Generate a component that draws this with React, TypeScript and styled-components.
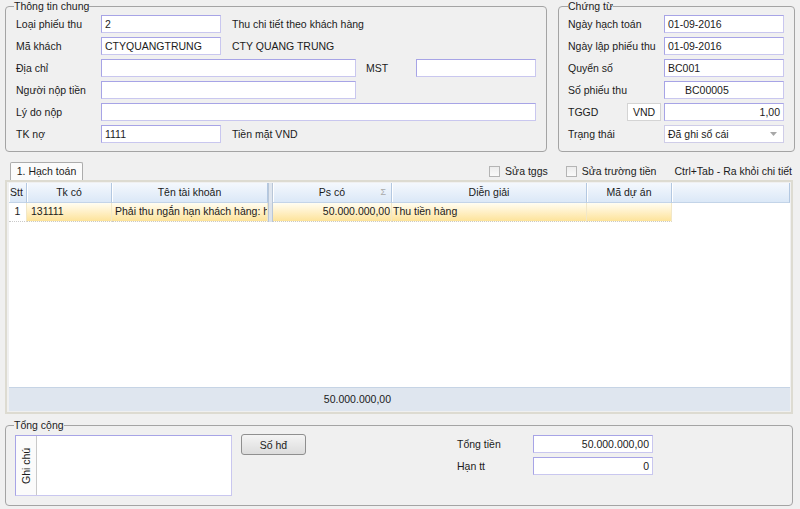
import styled, { createGlobalStyle } from "styled-components";

const GlobalStyle = createGlobalStyle`
  * { box-sizing: border-box; }
  html, body { margin: 0; padding: 0; background: #f0f0f0; }
  body {
    font-family: "Liberation Sans", Arial, sans-serif;
    font-size: 10.5px;
    color: #1b1b1b;
  }
  #root { width: 800px; height: 509px; overflow: hidden; }
`;

const Page = styled.div`
  display: flex;
  flex-direction: column;
  width: 800px;
  height: 509px;
`;

const TopSection = styled.div`
  display: flex;
  gap: 11px;
  padding-left: 5px;
`;

const Group = styled.fieldset<{ $w: number; $h: number }>`
  width: ${p => p.$w}px;
  height: ${p => p.$h}px;
  min-width: 0;
  margin: 0;
  padding: 3px 10px 0 10px;
  border: 1px solid #a4a4a4;
  border-radius: 4px;
`;

const Legend = styled.legend<{ $shift: number }>`
  padding: 0;
  margin-left: ${p => p.$shift}px;
  height: 12px;
  line-height: 12px;
`;

const Rows = styled.div`
  display: flex;
  flex-direction: column;
  gap: 4px;
`;

const Row = styled.div`
  display: flex;
  align-items: center;
  height: 18px;
`;

const Label = styled.span<{ $w: number; $gap?: number }>`
  flex: none;
  width: ${p => p.$w}px;
  margin-left: ${p => p.$gap ?? 0}px;
  white-space: nowrap;
`;

const Note = styled.span`
  margin-left: 11px;
  white-space: nowrap;
`;

const Input = styled.div<{ $w: number; $right?: boolean; $pad?: number }>`
  flex: none;
  width: ${p => p.$w}px;
  height: 18px;
  padding: 0 ${p => (p.$right ? 3 : 0)}px 0 ${p => p.$pad ?? 3}px;
  background: #fff;
  border: 1px solid #c9c7ef;
  border-top-color: #a7a4e6;
  border-left-color: #a7a4e6;
  line-height: 16px;
  text-align: ${p => (p.$right ? "right" : "left")};
  white-space: nowrap;
  overflow: hidden;
`;

const CurrencyBox = styled.div`
  flex: none;
  width: 34px;
  height: 18px;
  margin-right: 3px;
  background: #fff;
  border: 1px solid #d4d4d4;
  line-height: 16px;
  text-align: center;
`;

const Combo = styled.div`
  flex: none;
  display: flex;
  align-items: center;
  justify-content: space-between;
  width: 120px;
  height: 18px;
  padding: 0 6px 0 3px;
  background: #fff;
  border: 1px solid #cfcde8;
  line-height: 16px;
`;

const TabBar = styled.div`
  display: flex;
  align-items: center;
  height: 18px;
  margin-top: 10px;
  padding: 0 8px 0 10px;
`;

const Tab = styled.div`
  align-self: flex-end;
  width: 73px;
  height: 18px;
  border: 1px solid #acacac;
  border-bottom: none;
  border-radius: 2px 2px 0 0;
  background: #fbfbfb;
  line-height: 17px;
  text-align: center;
`;

const TabOptions = styled.div`
  display: flex;
  align-items: center;
  gap: 18px;
  margin-left: auto;
`;

const Check = styled.label`
  display: flex;
  align-items: center;
  gap: 5px;
  white-space: nowrap;
`;

const CheckBox = styled.span`
  width: 11px;
  height: 11px;
  border: 1px solid #b4b4b4;
  background: linear-gradient(#ececec, #fafafa);
`;

const GridPanel = styled.div`
  display: flex;
  height: 234px;
  margin: 0 7px 0 5px;
  padding: 1px 1px 1px 2px;
  border: 2px solid #dddbd1;
`;

const Grid = styled.div`
  flex: 1;
  display: flex;
  flex-direction: column;
  background: #fff;
`;

const COLUMNS = "18px 85px 156px 5px 119px 195px 85px 1fr";

const GridRow = styled.div<{ $h: number }>`
  display: grid;
  grid-template-columns: ${COLUMNS};
  height: ${p => p.$h}px;
`;

const HeadCell = styled.div<{ $left?: boolean }>`
  position: relative;
  padding: 0 ${p => (p.$left ? 1 : 0)}px;
  background: linear-gradient(#f4f8fd, #dbe8f7);
  border-right: 1px solid #b3c8e1;
  border-bottom: 1px solid #c3d4e8;
  box-shadow: inset 1px 0 #ffffff;
  line-height: 19px;
  text-align: ${p => (p.$left ? "left" : "center")};
  white-space: nowrap;
  overflow: hidden;
`;

const Grip = styled.div<{ $head?: boolean }>`
  background: ${p => (p.$head ? "#dfe6ef" : "#dde3ea")};
  border-left: 1px solid #b9c7d8;
  border-right: 1px solid #b9c7d8;
`;

const Sigma = styled.span`
  position: absolute;
  right: 5px;
  top: 0;
  color: #a9a9a9;
  font-size: 9px;
`;

const Cell = styled.div<{ $align?: string; $plain?: boolean; $pad?: number }>`
  padding: 0 ${p => (p.$align === "right" ? 1 : 0)}px 0 ${p => p.$pad ?? 3}px;
  background: ${p => (p.$plain ? "#fff" : "linear-gradient(#fffdf2 0%, #fff0c6 50%, #fde39a 100%)")};
  border-right: 1px solid #f1e7c8;
  border-bottom: 1px dotted #c9c9c9;
  line-height: 17px;
  text-align: ${p => p.$align ?? "left"};
  white-space: nowrap;
  overflow: hidden;
`;

const EmptyCell = styled.div`
  background: #fff;
`;

const GridBody = styled.div`
  flex: 1;
  background: #fff;
`;

const Footer = styled.div`
  display: grid;
  grid-template-columns: ${COLUMNS};
  height: 24px;
  background: #dfe6ef;
  border-top: 1px solid #c6d4e5;
  line-height: 22px;
`;

const FooterSum = styled.div`
  grid-column: 5;
  padding-right: 1px;
  text-align: right;
`;

const TotalGroup = styled(Group)`
  margin: 5px 7px 0 5px;
  padding: 4px 10px 0 9px;
`;

const TotalBody = styled.div`
  display: flex;
  align-items: flex-start;
`;

const NoteBox = styled.div`
  display: flex;
  width: 217px;
  height: 61px;
  background: #fff;
  border: 1px solid #c9c7ef;
  border-top-color: #a7a4e6;
  border-left-color: #a7a4e6;
`;

const NoteLabel = styled.div`
  width: 21px;
  writing-mode: vertical-rl;
  transform: rotate(180deg);
  text-align: center;
  line-height: 21px;
  background: #fbfbfb;
  border-left: 1px solid #c9c9c9;
`;

const Button = styled.button`
  width: 65px;
  height: 21px;
  margin: -1px 0 0 9px;
  padding: 0;
  font: inherit;
  color: inherit;
  background: linear-gradient(#f4f4f4, #dcdcdc);
  border: 1px solid #8f8f8f;
  border-radius: 3px;
`;

const Summary = styled.div`
  display: grid;
  grid-template-columns: 76px 120px;
  row-gap: 4px;
  align-items: center;
  margin-left: 151px;
`;

function ComboArrow() {
  return (
    <svg width="7" height="4" viewBox="0 0 7 4">
      <path d="M0 0h7L3.5 4z" fill="#a8a8a8" />
    </svg>
  );
}

const generalRows = [
  { label: "Loại phiếu thu", value: "2", note: "Thu chi tiết theo khách hàng" },
  { label: "Mã khách", value: "CTYQUANGTRUNG", note: "CTY QUANG TRUNG" },
];

const voucherRows = [
  { label: "Ngày hạch toán", value: "01-09-2016", pad: 3 },
  { label: "Ngày lập phiếu thu", value: "01-09-2016", pad: 3 },
  { label: "Quyển số", value: "BC001", pad: 3 },
  { label: "Số phiếu thu", value: "BC00005", pad: 20 },
];

export default function App() {
  return (
    <Page>
      <GlobalStyle />
      <TopSection>
        <Group $w={542} $h={152}>
          <Legend $shift={-2}>Thông tin chung</Legend>
          <Rows>
            {generalRows.map(r => (
              <Row key={r.label}>
                <Label $w={85}>{r.label}</Label>
                <Input $w={120}>{r.value}</Input>
                <Note>{r.note}</Note>
              </Row>
            ))}
            <Row>
              <Label $w={85}>Địa chỉ</Label>
              <Input $w={255} />
              <Label $w={50} $gap={10}>MST</Label>
              <Input $w={120} />
            </Row>
            <Row>
              <Label $w={85}>Người nộp tiền</Label>
              <Input $w={255} />
            </Row>
            <Row>
              <Label $w={85}>Lý do nộp</Label>
              <Input $w={435} />
            </Row>
            <Row>
              <Label $w={85}>TK nợ</Label>
              <Input $w={120}>1111</Input>
              <Note>Tiền mặt VND</Note>
            </Row>
          </Rows>
        </Group>

        <Group $w={237} $h={152} style={{ paddingLeft: 9 }}>
          <Legend $shift={0}>Chứng từ</Legend>
          <Rows>
            {voucherRows.map(r => (
              <Row key={r.label}>
                <Label $w={96}>{r.label}</Label>
                <Input $w={120} $pad={r.pad}>{r.value}</Input>
              </Row>
            ))}
            <Row>
              <Label $w={59}>TGGD</Label>
              <CurrencyBox>VND</CurrencyBox>
              <Input $w={120} $right>1,00</Input>
            </Row>
            <Row>
              <Label $w={96}>Trạng thái</Label>
              <Combo>
                <span>Đã ghi sổ cái</span>
                <ComboArrow />
              </Combo>
            </Row>
          </Rows>
        </Group>
      </TopSection>

      <TabBar>
        <Tab>1. Hạch toán</Tab>
        <TabOptions>
          <Check>
            <CheckBox />
            Sửa tggs
          </Check>
          <Check>
            <CheckBox />
            Sửa trường tiền
          </Check>
          <span>Ctrl+Tab - Ra khỏi chi tiết</span>
        </TabOptions>
      </TabBar>

      <GridPanel>
        <Grid>
          <GridRow $h={20}>
            <HeadCell $left>Stt</HeadCell>
            <HeadCell>Tk có</HeadCell>
            <HeadCell>Tên tài khoản</HeadCell>
            <Grip $head />
            <HeadCell>
              Ps có
              <Sigma>Σ</Sigma>
            </HeadCell>
            <HeadCell>Diễn giải</HeadCell>
            <HeadCell>Mã dự án</HeadCell>
            <HeadCell />
          </GridRow>
          <GridRow $h={19}>
            <Cell $plain $align="center" $pad={0}>1</Cell>
            <Cell $pad={4}>131111</Cell>
            <Cell>Phải thu ngắn hạn khách hàng: h</Cell>
            <Grip />
            <Cell $align="right">50.000.000,00</Cell>
            <Cell $pad={1}>Thu tiền hàng</Cell>
            <Cell />
            <EmptyCell />
          </GridRow>
          <GridBody />
          <Footer>
            <FooterSum>50.000.000,00</FooterSum>
          </Footer>
        </Grid>
      </GridPanel>

      <TotalGroup $w={788} $h={87}>
        <Legend $shift={-1}>Tổng cộng</Legend>
        <TotalBody>
          <NoteBox>
            <NoteLabel>Ghi chú</NoteLabel>
          </NoteBox>
          <Button>Số hđ</Button>
          <Summary>
            <span>Tổng tiền</span>
            <Input $w={120} $right>50.000.000,00</Input>
            <span>Hạn tt</span>
            <Input $w={120} $right>0</Input>
          </Summary>
        </TotalBody>
      </TotalGroup>
    </Page>
  );
}
